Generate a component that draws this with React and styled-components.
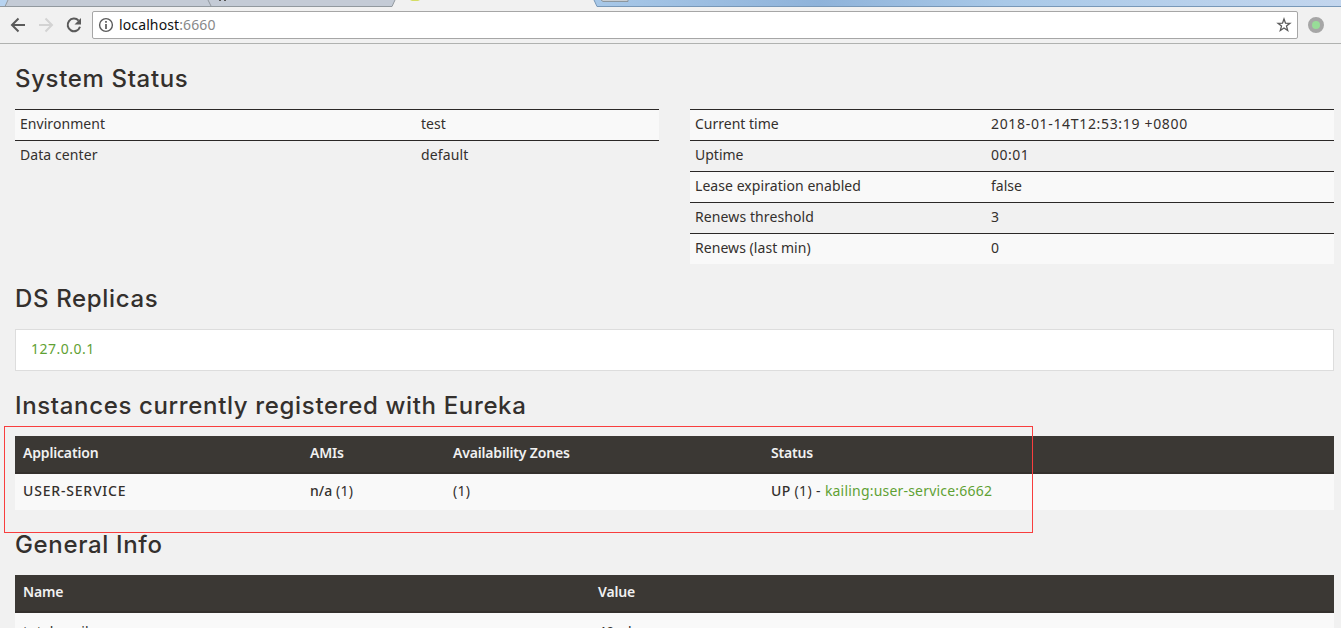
import React from "react";
import styled, { createGlobalStyle } from "styled-components";

const GlobalStyle = createGlobalStyle`
  * { box-sizing: border-box; }
  html, body { margin: 0; height: 628px; overflow: hidden; background: #f1f1f1; }
  body {
    font: 14px/20px "Noto Sans", "Open Sans", sans-serif;
    color: #34302d;
  }
`;

const Window = styled.div`
  position: relative;
  width: 1341px;
  height: 628px;
  overflow: hidden;
`;

const Browser = styled.header`
  height: 44px;
  background: #f1f1f1;
  border-bottom: 1px solid #b0b2b0;
`;

const TabStrip = styled.svg`
  display: block;
  width: 1341px;
  height: 7px;
`;

const Toolbar = styled.div`
  display: flex;
  align-items: center;
  height: 36px;
  padding: 0 17px 0 10px;
`;

const NavIcons = styled.svg`
  display: block;
  flex: none;
  width: 82px;
  height: 28px;
`;

const AddressBar = styled.div`
  display: flex;
  align-items: center;
  width: 1206px;
  height: 28px;
  padding: 0 5px;
  background: #fff;
  border: 1px solid #a6a6a6;
  border-radius: 2px;
`;

const Url = styled.div`
  flex: 1;
  margin-left: 5px;
  color: #111;
  font-size: 14px;
  letter-spacing: 0.12px;
`;

const Port = styled.span`
  color: #888;
`;

const Glyph = styled.svg`
  display: block;
  flex: none;
`;

const Extension = styled.span`
  width: 16px;
  height: 16px;
  margin-left: 10px;
  border: 4px solid #a6a6a6;
  border-radius: 50%;
  background: #98dc98;
`;

const Page = styled.main`
  width: 1349px;
  padding: 0 15px;
`;

const Heading = styled.h1`
  margin: 0;
  padding-top: 22px;
  height: 65px;
  font: 500 24px/26px Inter, sans-serif;
  letter-spacing: 0.65px;
  white-space: nowrap;
`;

const Columns = styled.div`
  display: grid;
  grid-template-columns: 644px 644px;
  column-gap: 31px;
  align-items: start;
  height: 155px;
`;

const StatusTable = styled.div`
  display: grid;
`;

const StatusRow = styled.div`
  display: grid;
  grid-template-columns: ${(p) => p.$first}px 1fr;
  height: 31px;
  padding-left: 5px;
  line-height: 28px;
  border-top: 1px solid #2b2827;
  background: ${(p) => (p.$striped ? "#f9f9f9" : "transparent")};
`;

const Text = styled.span`
  letter-spacing: ${(p) => p.$track || 0}px;
  white-space: pre;
`;

const Strong = styled(Text)`
  font-weight: 500;
`;

const Link = styled(Text)`
  color: #5fa134;
`;

const Replicas = styled.div`
  height: 42px;
  width: 1319px;
  padding-left: 15px;
  line-height: 38px;
  background: #fff;
  border: 1px solid #ddd;
`;

const TableHead = styled.div`
  display: grid;
  grid-template-columns: ${(p) => p.$columns};
  width: 1319px;
  height: 38px;
  padding-left: 8px;
  line-height: 34px;
  color: #f1f1f1;
  font-weight: 600;
  letter-spacing: -0.17px;
  background: #3b3834;
  border-bottom: 2px solid #34302d;
`;

const HeadCell = styled.span`
  white-space: nowrap;
`;

const TableRow = styled.div`
  display: grid;
  grid-template-columns: ${(p) => p.$columns};
  width: 1319px;
  height: 36px;
  padding-left: 8px;
  line-height: ${(p) => p.$line || 34}px;
  background: #f9f9f9;
`;

const Highlight = styled.div`
  position: absolute;
  left: 4px;
  top: 426px;
  width: 1029px;
  height: 107px;
  border: 1px solid #f83e3e;
`;

const environment = [
  ["Environment", "test", 0.05, 0],
  ["Data center", "default", 0.08, 0.12],
];

const runtime = [
  ["Current time", "2018-01-14T12:53:19 +0800", 0, 0.67],
  ["Uptime", "00:01", 0, 0.5],
  ["Lease expiration enabled", "false", 0.06, 0],
  ["Renews threshold", "3", 0.1, 0],
  ["Renews (last min)", "0", 0.05, 0],
];

const instanceColumns = "287px 143px 318px 1fr";
const infoColumns = "575px 1fr";

function Status({ rows, first }) {
  return (
    <StatusTable>
      {rows.map(([name, value, nameTrack, valueTrack], i) => (
        <StatusRow key={name} $first={first} $striped={i % 2 === 0}>
          <Text $track={nameTrack}>{name}</Text>
          <Text $track={valueTrack}>{value}</Text>
        </StatusRow>
      ))}
    </StatusTable>
  );
}

function Tabs() {
  return (
    <TabStrip viewBox="0 0 1341 7">
      <defs>
        <linearGradient id="sky">
          <stop offset="0" stopColor="#a8c8e8" />
          <stop offset=".3" stopColor="#8fb3da" />
          <stop offset=".55" stopColor="#a9c9e8" />
          <stop offset="1" stopColor="#c3d6ee" />
        </linearGradient>
      </defs>
      <path d="M0 0H8L5 6.500H0Z" fill="#b7d3f0" />
      <path d="M8 0H395L392 6.500H5Z" fill="#c4cbd6" />
      <path d="M0 6.500H392L395 0M8 0L5 6.500M208 0L211 6" fill="none" stroke="#92999f" />
      <path d="M594 0H1341V6.500H597Z" fill="url(#sky)" />
      <path d="M594 0L597 6.500H1341" fill="none" stroke="#7898b8" />
      <path d="M601 0L603 1.500H628V0" fill="#c8cdd2" stroke="#8c979f" />
      <path d="M219 0h2v1h-2zM224 0h2v1h-2z" fill="#555" />
      <path d="M410 0h10l-2 1h-6z" fill="#d4dd65" />
    </TabStrip>
  );
}

function Chrome() {
  return (
    <Browser>
      <Tabs />
      <Toolbar>
        <NavIcons viewBox="10 11 82 28" fill="none" strokeWidth="2">
          <path d="M25 25H12.500M18.500 18.500L12 25L18.500 31.500" stroke="#5a5a5a" />
          <path d="M39 25H51.500M45.500 18.500L52 25L45.500 31.500" stroke="#d3d3d3" />
          <path d="M78.600 20.600A6.300 6.300 0 1 0 80 26.800" stroke="#5a5a5a" />
          <path d="M81 18V24.500H74.500Z" fill="#5a5a5a" />
        </NavIcons>
        <AddressBar>
          <Glyph width="16" height="16" viewBox="0 0 16 16" fill="none" stroke="#5a5a5a">
            <circle cx="8" cy="8" r="6.400" strokeWidth="1.400" />
            <path d="M8 7V12M8 4V5.700" strokeWidth="1.700" />
          </Glyph>
          <Url>
            localhost<Port>:6660</Port>
          </Url>
          <Glyph width="16" height="16" viewBox="0 0 16 16" fill="none" stroke="#5a5a5a" strokeWidth="1.300">
            <path d="M8 2L9.500 6.100L14 6.300L10.500 9.100L11.700 13.500L8 11L4.300 13.500L5.500 9.100L2 6.300L6.500 6.100Z" />
          </Glyph>
        </AddressBar>
        <Extension />
      </Toolbar>
    </Browser>
  );
}

export default function App() {
  return (
    <Window>
      <GlobalStyle />
      <Chrome />
      <Page>
        <Heading>System Status</Heading>
        <Columns>
          <Status rows={environment} first={401} />
          <Status rows={runtime} first={296} />
        </Columns>
        <Heading>DS Replicas</Heading>
        <Replicas>
          <Link $track={0.5}>127.0.0.1</Link>
        </Replicas>
        <Heading>Instances currently registered with Eureka</Heading>
        <TableHead $columns={instanceColumns}>
          <HeadCell>Application</HeadCell>
          <HeadCell>AMIs</HeadCell>
          <HeadCell>Availability Zones</HeadCell>
          <HeadCell>Status</HeadCell>
        </TableHead>
        <TableRow $columns={instanceColumns}>
          <Strong $track={0.8}>USER-SERVICE</Strong>
          <Text $track={0.2}><Strong>n/a</Strong> (1)</Text>
          <Text $track={0.3}>(1)</Text>
          <Text $track={0.35}>
            <Strong $track={0.35}>UP</Strong> (1) - <Link $track={0.2}>kailing:user-service:6662</Link>
          </Text>
        </TableRow>
        <Heading>General Info</Heading>
        <TableHead $columns={infoColumns}>
          <HeadCell>Name</HeadCell>
          <HeadCell>Value</HeadCell>
        </TableHead>
        <TableRow $columns={infoColumns} $line={37}>
          <Text $track={0.1}>total-avail-memory</Text>
          <Text $track={0.3}>49mb</Text>
        </TableRow>
      </Page>
      <Highlight />
    </Window>
  );
}
